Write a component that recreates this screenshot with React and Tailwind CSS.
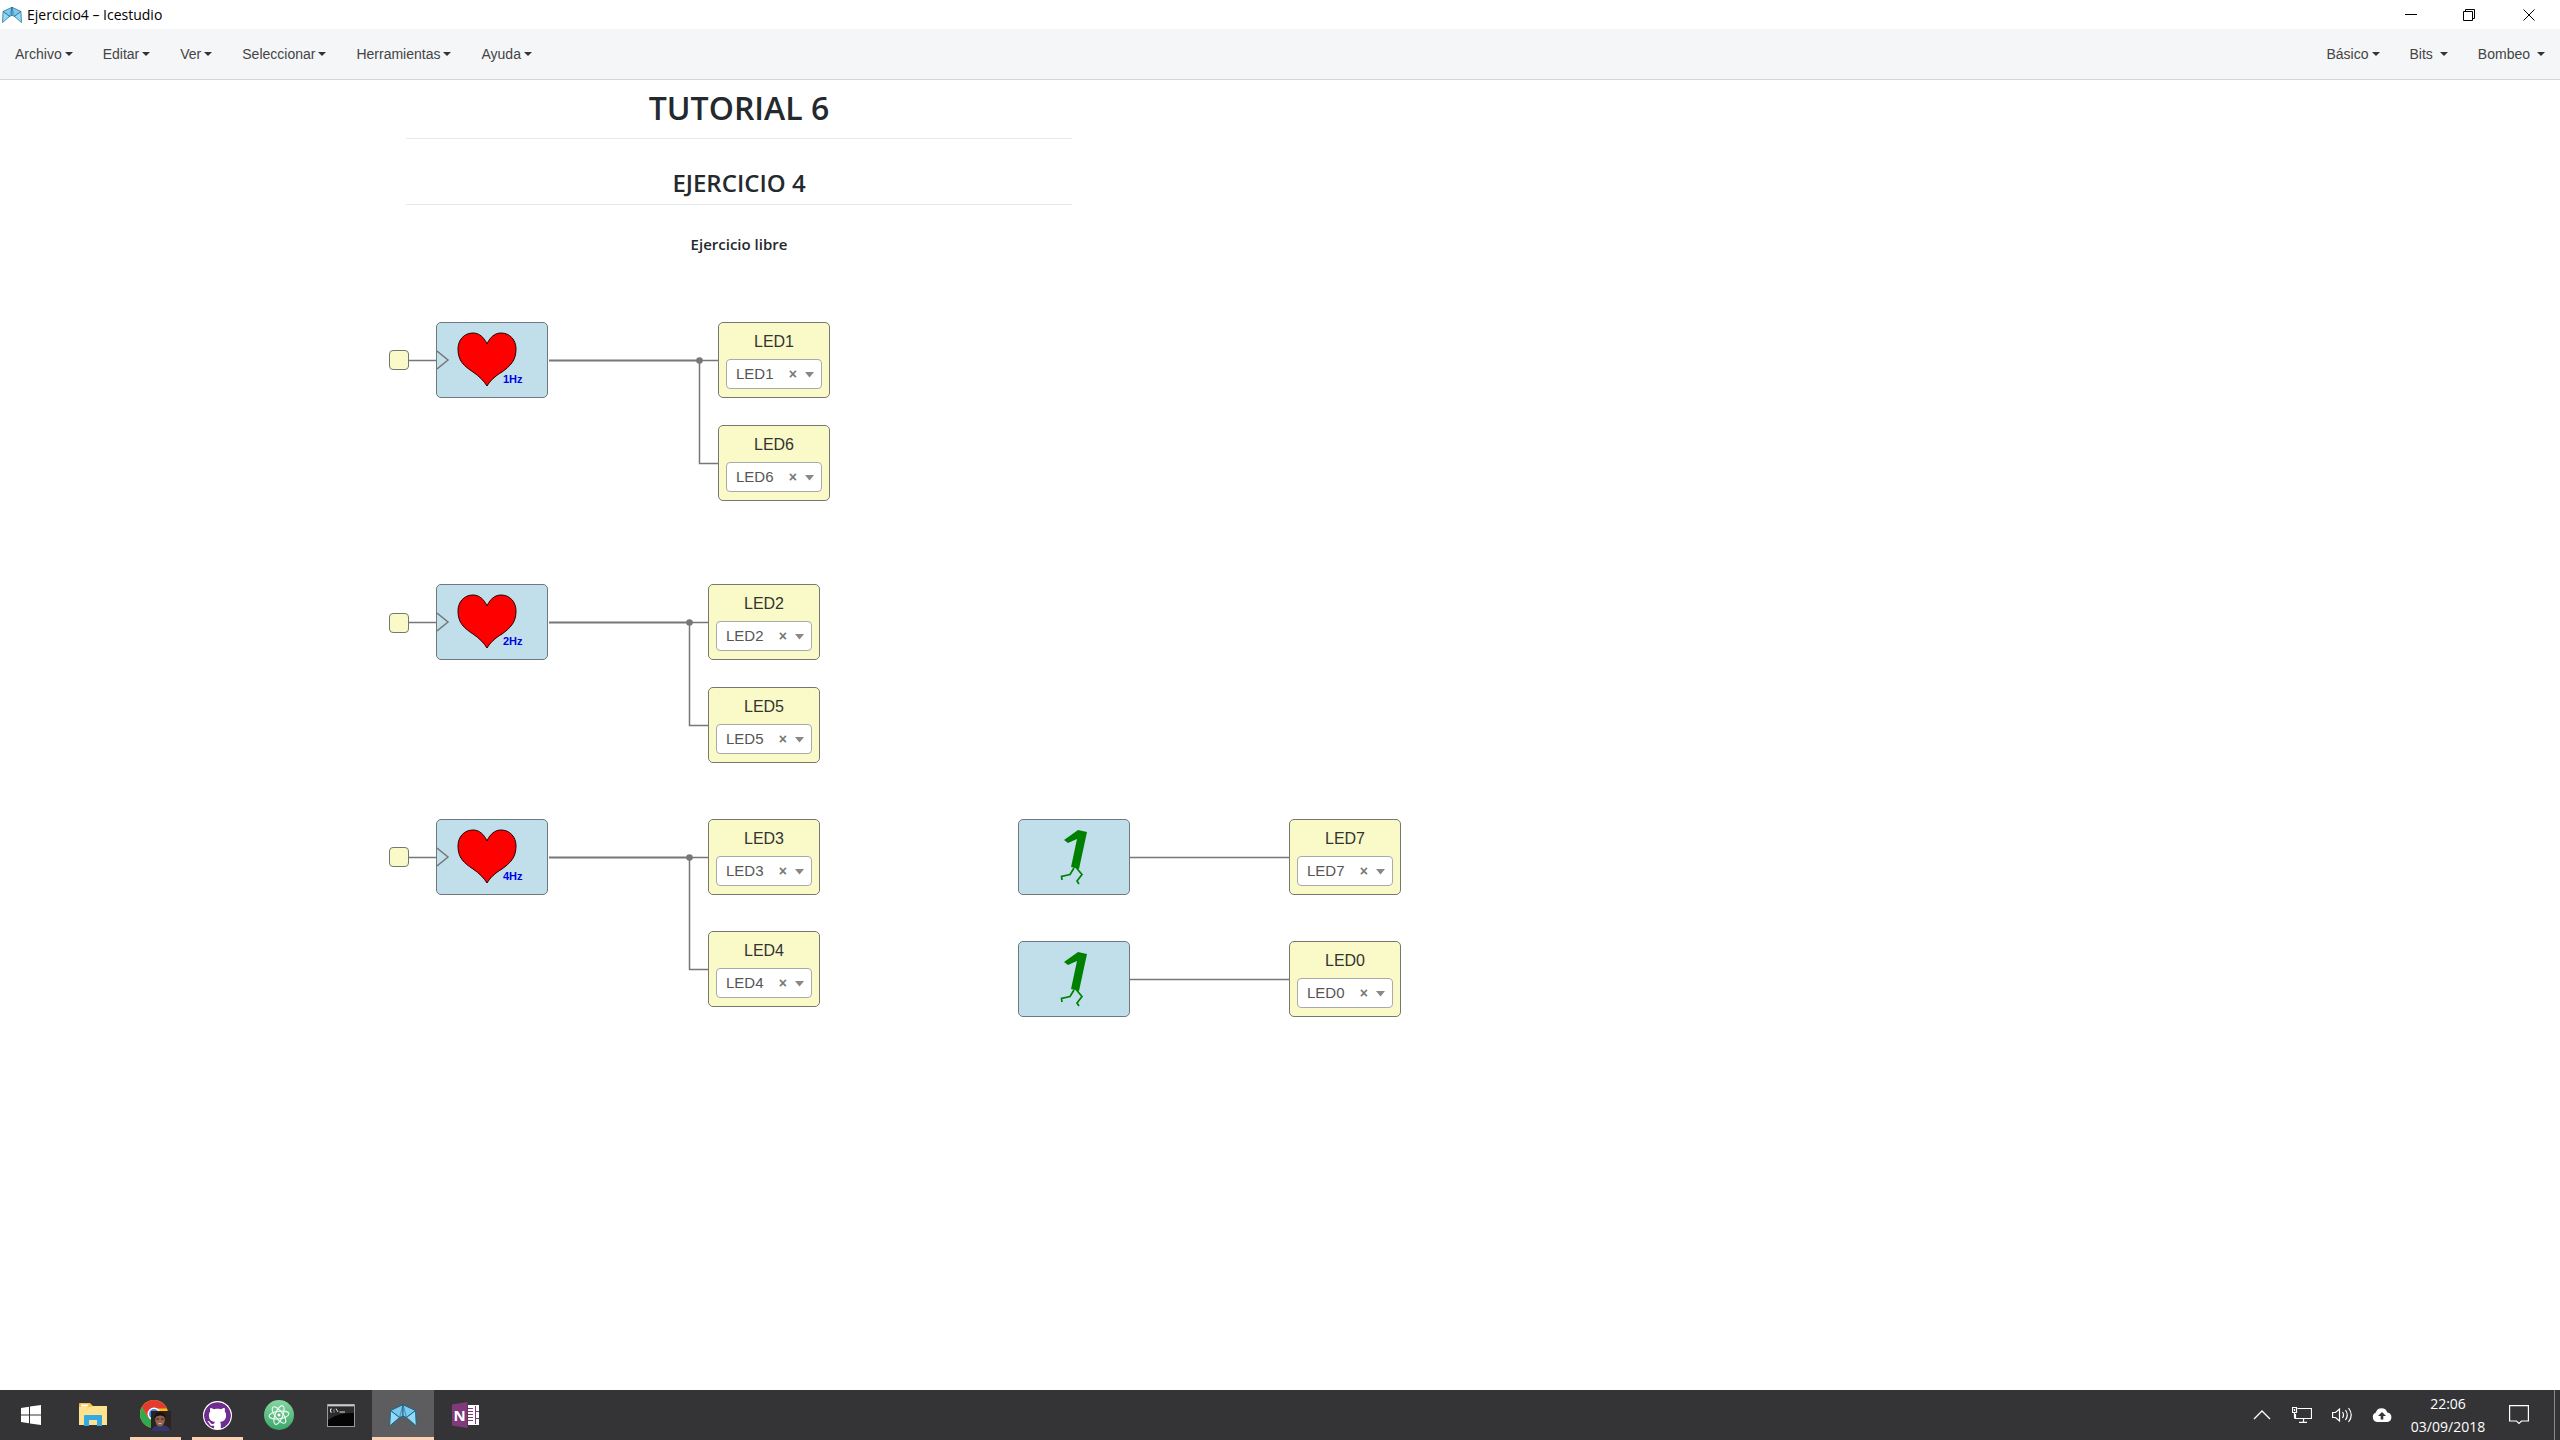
import { SiGithub } from "react-icons/si";

const LINE = "#777777";

/* Geometry of the circuit, in canvas pixels */
const inputs = [
  { x: 389, y: 270 },
  { x: 389, y: 533 },
  { x: 389, y: 767 },
];
const hearts = [
  { x: 436, y: 242, label: "1Hz" },
  { x: 436, y: 504, label: "2Hz" },
  { x: 436, y: 739, label: "4Hz" },
];
const ones = [
  { x: 1018, y: 739 },
  { x: 1018, y: 861 },
];
const leds = [
  { x: 718, y: 242, name: "LED1" },
  { x: 718, y: 345, name: "LED6" },
  { x: 708, y: 504, name: "LED2" },
  { x: 708, y: 607, name: "LED5" },
  { x: 708, y: 739, name: "LED3" },
  { x: 708, y: 851, name: "LED4" },
  { x: 1289, y: 739, name: "LED7" },
  { x: 1289, y: 861, name: "LED0" },
];
const branches = [
  { y: 280, x: 699, end: 718, y2: 383 },
  { y: 542, x: 689, end: 708, y2: 645 },
  { y: 777, x: 689, end: 708, y2: 889 },
];

function Caret() {
  return (
    <svg width="8" height="4" viewBox="0 0 8 4" aria-hidden="true">
      <path d="M0 0H8L4 4Z" fill="#333" />
    </svg>
  );
}

function MenuItem({ children, spaced }) {
  return (
    <button
      type="button"
      className={`flex h-[50px] items-center px-[15px] text-[14px] leading-5 text-[#444] ${spaced ? "gap-[7px]" : "gap-[3px]"}`}
    >
      {children}
      <Caret />
    </button>
  );
}

function AppLogo({ className }) {
  return (
    <svg viewBox="0 0 28 23" className={className} aria-hidden="true">
      <g stroke="#1d6485" strokeWidth="1" strokeLinejoin="round">
        <path d="M1.500 6.500L14 .7V12L10.500 13.500Z" fill="#7ccbee" />
        <path d="M26.500 6.500L14 .7V12L17.500 13.500Z" fill="#7ccbee" />
        <path d="M1.500 6.500L10.500 13.500L.7 22Z" fill="#90dbfa" />
        <path d="M26.500 6.500L17.500 13.500L27.300 22Z" fill="#90dbfa" />
        <path d="M14 .7L10.500 13.500M14 .7L17.500 13.500" strokeWidth=".6" />
      </g>
    </svg>
  );
}

function TitleBar() {
  return (
    <header className="flex h-[29px] items-center justify-between bg-white pl-[2px] font-['Open_Sans',sans-serif]">
      <div className="flex items-center gap-[5px]">
        <AppLogo className="h-[18px] w-[20px]" />
        <h1 className="text-[14px] leading-5 text-black">Ejercicio4 – Icestudio</h1>
      </div>
      <div className="flex h-full">
        <button type="button" aria-label="Minimizar" className="flex w-[58px] items-center justify-center">
          <svg width="12" height="12" viewBox="0 0 12 12"><path d="M0 5.500H12" stroke="#000" /></svg>
        </button>
        <button type="button" aria-label="Restaurar" className="flex w-[58px] items-center justify-center">
          <svg width="12" height="12" viewBox="0 0 12 12" fill="none" stroke="#000">
            <path d="M.5 2.500H9.500V11.500H.5ZM2.500 2.500V.5H11.500V9.500H9.500" />
          </svg>
        </button>
        <button type="button" aria-label="Cerrar" className="flex w-[62px] items-center justify-center">
          <svg width="12" height="12" viewBox="0 0 12 12" stroke="#000"><path d="M.5 .5L11.500 11.500M11.500 .5L.5 11.500" /></svg>
        </button>
      </div>
    </header>
  );
}

function MenuBar() {
  return (
    <nav className="flex h-[51px] items-start justify-between border-b border-[#d3d6d9] bg-[#f4f6f8]">
      <div className="flex">
        {["Archivo", "Editar", "Ver", "Seleccionar", "Herramientas", "Ayuda"].map((m) => (
          <MenuItem key={m}>{m}</MenuItem>
        ))}
      </div>
      <div className="flex">
        <MenuItem>Básico</MenuItem>
        <MenuItem spaced>Bits</MenuItem>
        <MenuItem spaced>Bombeo</MenuItem>
      </div>
    </nav>
  );
}

function Note() {
  return (
    <section className="absolute top-0 left-[406px] w-[666px] text-center font-['Open_Sans',sans-serif] font-semibold text-[#24292e]">
      <h2 className="border-b border-[#e6e8ea] pt-[8px] pb-[10px] text-[32px] leading-[40px]">TUTORIAL 6</h2>
      <h3 className="mt-[27px] border-b border-[#e6e8ea] pb-[4px] text-[24px] leading-[34px]">EJERCICIO 4</h3>
      <p className="mt-[27px] text-[15px] leading-6">Ejercicio libre</p>
    </section>
  );
}

function HeartBlock({ x, y, label }) {
  return (
    <div
      className="absolute h-[76px] w-[112px] rounded-[5px] border border-[#6f787c] bg-[#c0dfea]"
      style={{ left: x, top: y }}
    >
      <svg viewBox="1 1 110 74" className="h-full w-full">
        <path d="M1 29L12 38L1 47" fill="none" stroke={LINE} strokeWidth="1.500" />
        <path
          d="M51 22C48 15 43 11 37 11C28 11 22 18 22 27C22 39 28 44 37 50C43 54 48 59 51 64C54 59 59 54 66 50C74 44 80 39 80 27C80 18 74 11 65 11C59 11 54 15 51 22Z"
          fill="#f00"
          stroke="#200"
          strokeWidth="1"
        />
        <text x="67" y="61" fontSize="11" fontWeight="700" fill="#0000e6" fontFamily="Liberation Sans, sans-serif">
          {label}
        </text>
      </svg>
    </div>
  );
}

function OneBlock({ x, y }) {
  return (
    <div
      className="absolute h-[76px] w-[112px] rounded-[5px] border border-[#6f787c] bg-[#c0dfea]"
      style={{ left: x, top: y }}
    >
      <svg viewBox="1 1 110 74" className="h-full w-full">
        <path d="M60 11L69 13L61 50L53 48L59 20L50 24L46 21Z" fill="#008000" />
        <path d="M56 49L52 55.500L43.500 57.500L44 61M58.500 49L64 55.500L59 62L61 65" fill="none" stroke="#008000" strokeWidth="1.700" />
      </svg>
    </div>
  );
}

function LedBlock({ x, y, name }) {
  return (
    <div
      className="absolute flex h-[76px] w-[112px] flex-col items-center rounded-[5px] border border-[#777770] bg-[#fafac9]"
      style={{ left: x, top: y }}
    >
      <label htmlFor={name} className="mt-[9px] text-[16px] leading-5 text-[#333]">
        {name}
      </label>
      <div className="relative mt-[7px] h-[30px] w-[96px]">
        <select
          id={name}
          defaultValue={name}
          className="h-full w-full appearance-none rounded-[4px] border border-[#aaa] bg-white pl-[9px] text-[15px] leading-5 text-[#555] outline-none"
        >
          <option>{name}</option>
        </select>
        <button type="button" aria-label={`Quitar ${name}`} className="absolute top-[6px] right-[25px] text-[14px] leading-[18px] font-bold text-[#777]">
          ×
        </button>
        <svg width="9" height="6" viewBox="0 0 9 6" className="pointer-events-none absolute top-[13px] right-[8px]" aria-hidden="true">
          <path d="M0 0H9L4.500 5.500Z" fill="#888" />
        </svg>
      </div>
    </div>
  );
}

function Wires() {
  return (
    <svg className="absolute inset-0 h-full w-full" fill="none" stroke={LINE} strokeWidth="1.500" aria-hidden="true">
      {branches.map((b) => (
        <g key={b.y}>
          <path d={`M409 ${b.y + 0.5}H436M${b.x} ${b.y + 0.5}H${b.end}M${b.x + 0.5} ${b.y}V${b.y2 + 0.5}H${b.end}`} />
          <path d={`M549 ${b.y + 0.5}H${b.x}`} strokeWidth="2" />
          <circle cx={b.x + 0.5} cy={b.y + 0.5} r="3.300" fill={LINE} stroke="none" />
        </g>
      ))}
      <path d="M1130 777.500H1289M1130 899.500H1289" />
    </svg>
  );
}

function Canvas() {
  return (
    <main className="relative flex-1 overflow-hidden bg-white">
      <Wires />
      <Note />
      {inputs.map((i) => (
        <div
          key={i.y}
          className="absolute size-[20px] rounded-[4px] border border-[#777770] bg-[#fafac9]"
          style={{ left: i.x, top: i.y }}
        />
      ))}
      {hearts.map((h) => <HeartBlock key={h.label} {...h} />)}
      {ones.map((o) => <OneBlock key={o.y} {...o} />)}
      {leds.map((l) => <LedBlock key={l.name} {...l} />)}
    </main>
  );
}

function WindowsIcon() {
  return (
    <svg width="20" height="20" viewBox="0 0 20 20" fill="#fff">
      <path d="M0 3L8 1.800V9.500H0ZM9 1.600L20 0V9.500H9ZM0 10.500H8V18.200L0 17ZM9 10.500H20V20L9 18.400Z" />
    </svg>
  );
}

function ExplorerIcon() {
  return (
    <svg width="28" height="24" viewBox="0 0 28 24">
      <path d="M0 1Q0 0 1 0H11L14 3H27Q28 3 28 4V22H0Z" fill="#f0c348" />
      <path d="M2 1.500H10L8 3.500H2Z" fill="#fff" />
      <path d="M0 4H11L14 3H28V22H0Z" fill="#fde290" />
      <path d="M5 13Q5 12 6 12H22Q23 12 23 13V23H18V17H10V23H5Z" fill="#35a9e1" />
    </svg>
  );
}

function ChromeIcon() {
  return (
    <svg width="31" height="31" viewBox="0 0 31 31">
      <circle cx="14" cy="14" r="14" fill="#fbc116" />
      <path d="M1.900 7A14 14 0 0 0 14 28L20 17.500L14 14L8 17.500Z" fill="#2da94f" />
      <path d="M1.900 7A14 14 0 0 1 26.100 7L27 8.500H14L8 17.500Z" fill="#e33b2e" />
      <circle cx="14" cy="14" r="6.500" fill="#fff" />
      <circle cx="14" cy="14" r="5" fill="#4285f4" />
      <rect x="11" y="11" width="20" height="20" fill="#2c2220" />
      <path d="M11 31Q13 25 20 25Q28 24 31 31Z" fill="#35376b" />
      <ellipse cx="20" cy="20" rx="4.800" ry="6.500" fill="#94614e" />
      <path d="M14.500 18Q14.500 12 20 12.500Q25.500 12 25.500 18Q24 15.500 20 15.500Q16.500 15.500 14.500 18Z" fill="#1a120e" />
      <path d="M16.500 19H19M21 19H23.500" stroke="#2b1a14" strokeWidth="1.200" />
      <path d="M18.500 23.500H21.500" stroke="#d9b5a6" />
    </svg>
  );
}

function GithubIcon() {
  return (
    <span className="flex size-[29px] items-center justify-center rounded-full bg-white">
      <SiGithub className="size-[27px] rounded-full bg-white text-[#6f2c91]" />
    </span>
  );
}

function AtomIcon() {
  return (
    <svg width="30" height="30" viewBox="0 0 30 30">
      <defs>
        <linearGradient id="atom" x1="0" y1="0" x2="0" y2="1">
          <stop offset="0" stopColor="#85d6a0" />
          <stop offset="1" stopColor="#3aa76b" />
        </linearGradient>
      </defs>
      <circle cx="15" cy="15" r="15" fill="url(#atom)" />
      <g fill="none" stroke="#f2fbf5" strokeWidth="1.100">
        <ellipse cx="15" cy="15" rx="10" ry="3.800" transform="rotate(-8 15 15)" />
        <ellipse cx="15" cy="15" rx="10" ry="3.800" transform="rotate(52 15 15)" />
        <ellipse cx="15" cy="15" rx="10" ry="3.800" transform="rotate(112 15 15)" />
      </g>
      <circle cx="15" cy="15" r="1.500" fill="#fff" />
    </svg>
  );
}

function TerminalIcon() {
  return (
    <svg width="28" height="23" viewBox="0 0 28 23">
      <rect x=".5" y=".5" width="27" height="22" fill="#050505" stroke="#9a9a9a" />
      <path d="M1 1.500H27" stroke="#c9c9c9" strokeWidth="2" />
      <path d="M1 16Q12 8 27 9V3H1Z" fill="#2c2c2c" />
      <path d="M5 5H3.500V8H5M7 5.500V6.500M7 7.500V8.500M9 4.500L11 8M12.500 8H18" fill="none" stroke="#ddd" />
    </svg>
  );
}

function OneNoteIcon() {
  return (
    <div className="flex h-[26px] w-[27px] items-center">
      <div className="flex h-[26px] w-[16px] items-center justify-center bg-[#80397b] font-['Open_Sans',sans-serif] text-[15px] leading-4 font-bold text-white [clip-path:polygon(0_10%,100%_0,100%_100%,0_90%)]">
        N
      </div>
      <svg width="11" height="20" viewBox="0 0 11 20">
        <path d="M0 0H11V6H10V7H11V13H10V14H11V20H0Z" fill="#fff" />
        <path d="M0 3.500H5M0 6.500H5M0 9.500H5M0 12.500H5M0 15.500H5" stroke="#80397b" />
        <path d="M7.500 1V19M8 6.500H11M8 13.500H11" stroke="#80397b" />
      </svg>
    </div>
  );
}

function TaskButton({ label, running, active, children }) {
  return (
    <button
      type="button"
      aria-label={label}
      className={`flex h-full w-[62px] flex-col items-center ${active ? "bg-[#5d5d5f]" : ""}`}
    >
      <span className="flex flex-1 items-center pt-[3px]">{children}</span>
      <span className={`h-[3px] ${active ? "w-full bg-[#fcd0b4]" : "w-[51px]"} ${running ? "bg-[#fcd0b4]" : ""}`} />
    </button>
  );
}

function TaskBar() {
  return (
    <footer className="flex h-[50px] justify-between bg-[#343436] text-white">
      <div className="flex">
        <TaskButton label="Inicio"><WindowsIcon /></TaskButton>
        <TaskButton label="Explorador de archivos"><ExplorerIcon /></TaskButton>
        <TaskButton label="Chrome" running><ChromeIcon /></TaskButton>
        <TaskButton label="GitHub Desktop" running><GithubIcon /></TaskButton>
        <TaskButton label="Atom"><AtomIcon /></TaskButton>
        <TaskButton label="Símbolo del sistema"><TerminalIcon /></TaskButton>
        <TaskButton label="Icestudio" active><AppLogo className="h-[23px] w-[28px]" /></TaskButton>
        <TaskButton label="OneNote"><OneNoteIcon /></TaskButton>
      </div>
      <div className="flex items-center">
        <button type="button" aria-label="Mostrar iconos ocultos" className="flex w-[40px] justify-center">
          <svg width="18" height="10" viewBox="0 0 18 10" fill="none" stroke="#fff" strokeWidth="1.300"><path d="M1 9L9 1L17 9" /></svg>
        </button>
        <button type="button" aria-label="Red" className="flex w-[40px] justify-center">
          <svg width="20" height="16" viewBox="0 0 20 16" fill="none" stroke="#fff" strokeWidth="1.200">
            <path d="M5.500 1.500H19.500V11.500H3.500V7M.5 .5H4.500V5.500H.5ZM2.500 2V4M2.500 6V11.500M11.500 12V15M7 15.300H15" />
          </svg>
        </button>
        <button type="button" aria-label="Volumen" className="flex w-[40px] justify-center">
          <svg width="21" height="18" viewBox="0 0 21 18" fill="none" stroke="#fff" strokeWidth="1.200">
            <path d="M.6 6.500H3.500L7.500 3V15L3.500 11.500H.6Z" />
            <path d="M10.500 6Q12.500 9 10.500 12M13.500 4Q17 9 13.500 14M16.500 2Q22 9 16.500 16" />
          </svg>
        </button>
        <button type="button" aria-label="Copia en la nube" className="flex w-[40px] justify-center">
          <svg width="20" height="14" viewBox="0 0 20 14">
            <path d="M5 14A5 5 0 0 1 3.800 4.500A6 6 0 0 1 15.300 4.500A4.800 4.800 0 0 1 15.300 14Z" fill="#fff" />
            <path d="M10 4L14 8H11.300V11.500H8.700V8H6Z" fill="#343436" />
          </svg>
        </button>
        <div className="flex w-[92px] flex-col items-center font-['Open_Sans',sans-serif] text-[14px] leading-[23px]">
          <time>22:06</time>
          <time>03/09/2018</time>
        </div>
        <button type="button" aria-label="Notificaciones" className="flex w-[50px] justify-center">
          <svg width="20" height="20" viewBox="0 0 20 20" fill="none" stroke="#fff" strokeWidth="1.200">
            <path d="M.6 .6H19.400V16H12.500L10 18.500L7.500 16H.6Z" />
          </svg>
        </button>
        <div className="ml-[10px] h-full w-[6px] border-l border-[#8a8a8c]" />
      </div>
    </footer>
  );
}

export default function App() {
  return (
    <div className="flex min-h-screen flex-col bg-white font-['Liberation_Sans',Arial,sans-serif]">
      <TitleBar />
      <MenuBar />
      <Canvas />
      <TaskBar />
    </div>
  );
}
